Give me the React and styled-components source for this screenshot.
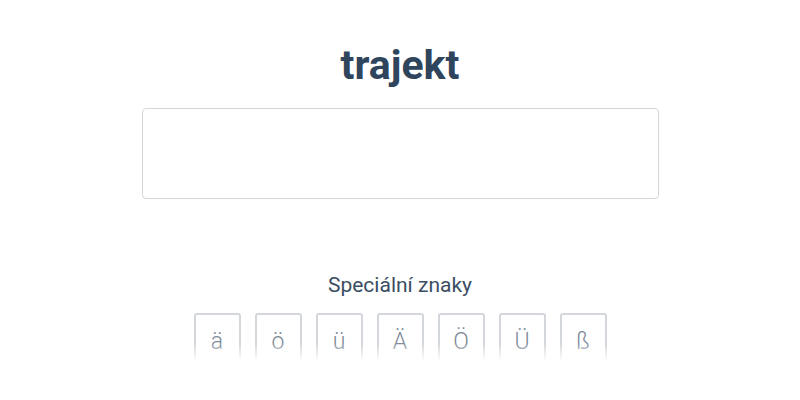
import React from "react";
import styled, { createGlobalStyle } from "styled-components";

const GlobalStyle = createGlobalStyle`
  body {
    margin: 0;
    background: #fff;
    font-family: Roboto, "Liberation Sans", sans-serif;
  }
`;

const Page = styled.div`
  width: 800px;
  height: 400px;
  display: flex;
  flex-direction: column;
  align-items: center;
  overflow: hidden;
`;

const Word = styled.h1`
  margin: 38px 0 0;
  font-size: 41px;
  font-weight: 700;
  line-height: 54px;
  color: #2f455d;
`;

const Answer = styled.textarea`
  box-sizing: border-box;
  width: 517px;
  height: 91px;
  margin-top: 16px;
  border: 1px solid #d6d6d6;
  border-radius: 4px;
  resize: none;
  outline: none;
  background: #fff;
`;

const Label = styled.div`
  margin-top: 73px;
  font-size: 21px;
  line-height: 26px;
  color: #3b4d62;
`;

const Keys = styled.div`
  position: relative;
  display: flex;
  gap: 14px;
  margin-top: 15px;
  height: 48px;
  overflow: hidden;

  &::after {
    content: "";
    position: absolute;
    left: 0;
    right: 0;
    bottom: 0;
    height: 18px;
    background: linear-gradient(rgba(255, 255, 255, 0), #fff);
  }
`;

const Key = styled.button`
  box-sizing: border-box;
  width: 47px;
  height: 60px;
  padding: 13px 0 0;
  border: 2px solid #d3d6da;
  border-radius: 3px;
  background: #fff;
  font-family: Roboto, "Liberation Sans", sans-serif;
  font-size: 23px;
  font-weight: 300;
  line-height: 28px;
  color: #7c8997;
  display: flex;
  justify-content: center;
  align-items: flex-start;
`;

const chars = ["ä", "ö", "ü", "Ä", "Ö", "Ü", "ß"];

export default function App() {
  return (
    <Page>
      <GlobalStyle />
      <Word>trajekt</Word>
      <Answer />
      <Label>Speciální znaky</Label>
      <Keys>
        {chars.map((c) => (
          <Key key={c}>{c}</Key>
        ))}
      </Keys>
    </Page>
  );
}
